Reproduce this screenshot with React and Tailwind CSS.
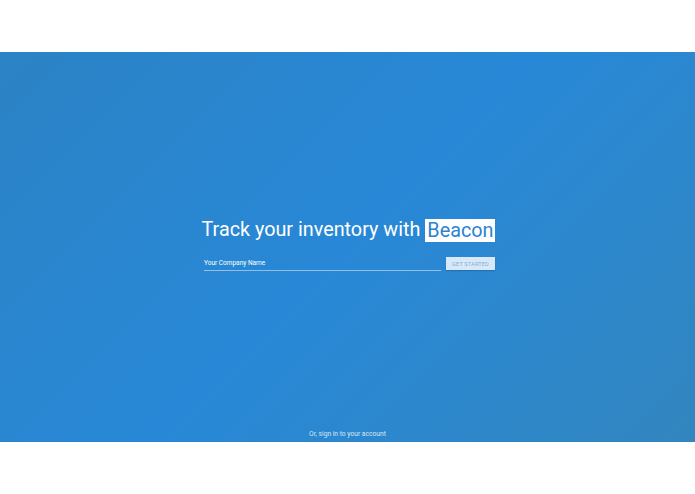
export default function App() {
  return (
    <div className="w-[695px] h-[494px] bg-white flex flex-col" style={{ fontFamily: "Roboto, 'Liberation Sans', sans-serif" }}>
      <div className="h-[52px] bg-white" />
      <div className="h-[390px] flex flex-col bg-[linear-gradient(135deg,#2c83c5_0%,#2888d7_50%,#3286bf_100%)]">
        <div className="h-[166px]" />
        <div className="flex flex-col items-center">
          <div className="flex items-center ml-[2px]">
            <span className="text-white text-[19.8px] leading-[24px] whitespace-nowrap">Track your inventory with</span>
            <span className="ml-[5px] bg-white text-[#2a84d0] text-[19.8px] leading-[23px] px-[2px] whitespace-nowrap">Beacon</span>
          </div>
          <div className="flex items-end w-[291px] mt-[15px] ml-[4px]">
            <div className="w-[237px] border-b border-[#8ec0ea] pb-[3px] pl-0">
              <span className="text-white text-[6.5px] leading-[8px] block">Your Company Name</span>
            </div>
            <div className="ml-[5px] mb-[1px] w-[49px] h-[13px] bg-[#d9e8f6] flex items-center justify-center shadow-[0_1px_1px_rgba(0,0,0,0.15)]">
              <span className="text-[#7fadda] text-[5.5px] leading-[6px] tracking-[0.2px]">GET STARTED</span>
            </div>
          </div>
        </div>
        <div className="flex-1" />
        <div className="flex justify-center pb-[4px]">
          <span className="text-[#d6e7f6] text-[6.7px] leading-[8px]">Or, sign in to your account</span>
        </div>
      </div>
      <div className="h-[52px] bg-white" />
    </div>
  );
}
